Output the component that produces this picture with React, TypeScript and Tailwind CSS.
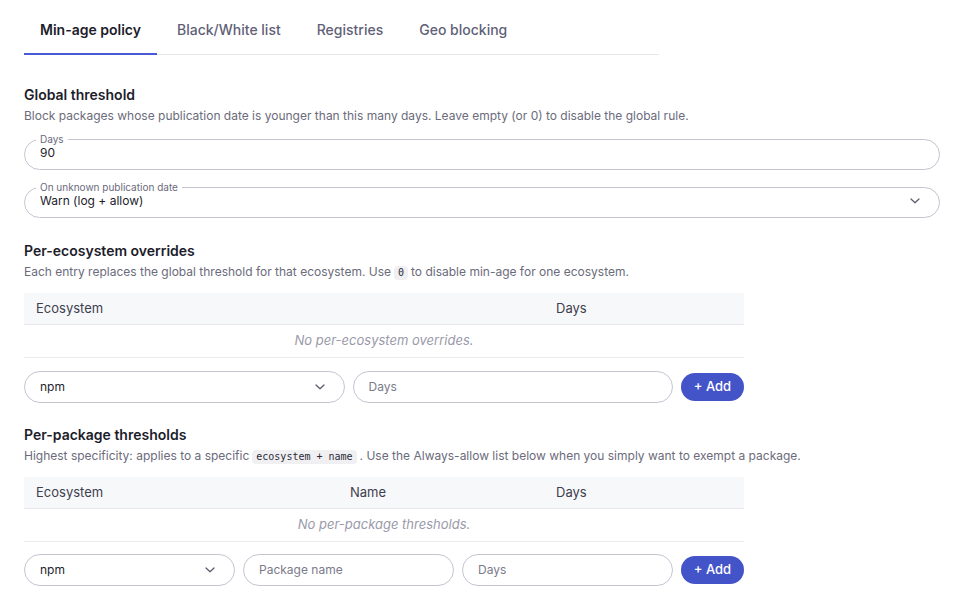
import React from "react";

const Chevron = () => (
  <svg width="10" height="6" viewBox="0 0 10 6" fill="none" className="shrink-0">
    <path d="M1 1L5 4.8L9 1" stroke="#5d5d72" strokeWidth="1.3" strokeLinecap="round" strokeLinejoin="round" />
  </svg>
);

const Field = ({ label, value, select }: { label: string; value: string; select?: boolean }) => (
  <fieldset className="border border-[#c6c4d1] rounded-[16px] pl-[11px] pr-[19px] pb-[7px] min-w-0">
    <legend className="px-[4px] text-[10px] leading-[10px] text-[#6a6a7c]">{label}</legend>
    <div className="flex items-center justify-between h-[18px] pl-[4px]">
      <span className="text-[12px] leading-[18px] text-[#1d1d2b]">{value}</span>
      {select && <Chevron />}
    </div>
  </fieldset>
);

const Pill = ({ text, placeholder, select }: { text: string; placeholder?: boolean; select?: boolean }) => (
  <div className="flex-1 min-w-0 h-[32px] border border-[#c6c4d1] rounded-[16px] flex items-center justify-between pl-[15px] pr-[19px]">
    <span className={"text-[12px] " + (placeholder ? "text-[#7b7b8b]" : "text-[#1d1d2b]")}>{text}</span>
    {select && <Chevron />}
  </div>
);

const AddButton = () => (
  <button className="w-[63px] h-[28px] rounded-full bg-[#4353c8] text-white text-[13px] font-medium shrink-0">
    + Add
  </button>
);

const Code = ({ children }: { children: React.ReactNode }) => (
  <code className="inline-block align-baseline leading-[14px] mx-[3px] px-[4px] rounded-[4px] bg-[#f0f0f3] text-[10px] text-[#2b2b38] font-['DejaVu_Sans_Mono',monospace]">
    {children}
  </code>
);

export default function App() {
  const tabs = ["Min-age policy", "Black/White list", "Registries", "Geo blocking"];
  return (
    <div className="w-[967px] min-h-[606px] bg-white font-['Inter',sans-serif] text-[#1d1d2b]">
      <div className="ml-6 w-[635px] border-b border-[#e7e7ec] flex gap-1 pt-[7px]">
        {tabs.map((t, i) => (
          <div
            key={t}
            className={
              "h-[48px] px-4 pb-[2px] -mb-px flex items-center border-b-[2px] text-[14px] " +
              (i === 0 ? "border-[#4959d6] font-semibold text-[#1d1d2b]" : "border-transparent font-medium text-[#5f5f78]")
            }
          >
            {t}
          </div>
        ))}
      </div>

      <div className="px-6 mt-[30px] w-[964px]">
        <h2 className="text-[14px] leading-[20px] font-semibold">Global threshold</h2>
        <p className="mt-[3px] text-[12px] leading-[16px] text-[#6b6b7b]">
          Block packages whose publication date is younger than this many days. Leave empty (or 0) to disable the global rule.
        </p>
        <div className="mt-[10px] flex flex-col gap-3">
          <Field label="Days" value="90" />
          <Field label="On unknown publication date" value="Warn (log + allow)" select />
        </div>

        <h2 className="mt-[23px] text-[14px] leading-[20px] font-semibold">Per-ecosystem overrides</h2>
        <p className="mt-[3px] text-[12px] leading-[16px] text-[#6b6b7b]">
          Each entry replaces the global threshold for that ecosystem. Use<Code>0</Code>to disable min-age for one ecosystem.
        </p>
        <div className="w-[720px]">
          <div className="mt-[13px]">
            <div className="grid grid-cols-[520px_200px] h-[32px] items-center bg-[#f7f8fa] border-b border-[#e6e6ec] text-[13px] text-[#3e3e4e]">
              <div className="px-3">Ecosystem</div>
              <div className="px-3">Days</div>
            </div>
            <div className="h-[33px] flex items-center justify-center border-b border-[#ebebef] text-[13px] italic text-[#9a9aaa]">
              No per-ecosystem overrides.
            </div>
          </div>
          <div className="mt-[13px] flex items-center gap-2">
            <Pill text="npm" select />
            <Pill text="Days" placeholder />
            <AddButton />
          </div>
        </div>

        <h2 className="mt-[22px] text-[14px] leading-[20px] font-semibold">Per-package thresholds</h2>
        <p className="mt-[3px] text-[12px] leading-[16px] text-[#6b6b7b]">
          Highest specificity: applies to a specific<Code>ecosystem + name</Code>. Use the Always-allow list below when you simply want to exempt a package.
        </p>
        <div className="w-[720px]">
          <div className="mt-[13px]">
            <div className="grid grid-cols-[314px_206px_200px] h-[32px] items-center bg-[#f7f8fa] border-b border-[#e6e6ec] text-[13px] text-[#3e3e4e]">
              <div className="px-3">Ecosystem</div>
              <div className="px-3">Name</div>
              <div className="px-3">Days</div>
            </div>
            <div className="h-[33px] flex items-center justify-center border-b border-[#ebebef] text-[13px] italic text-[#9a9aaa]">
              No per-package thresholds.
            </div>
          </div>
          <div className="mt-3 flex items-center gap-2">
            <Pill text="npm" select />
            <Pill text="Package name" placeholder />
            <Pill text="Days" placeholder />
            <AddButton />
          </div>
        </div>
      </div>
    </div>
  );
}
